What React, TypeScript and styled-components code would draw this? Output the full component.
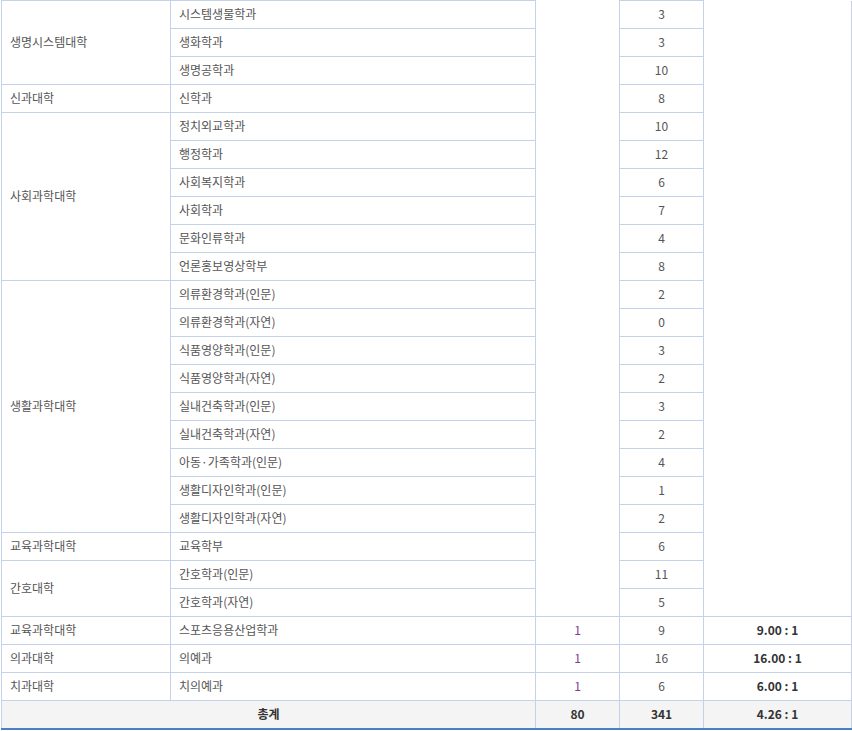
import React from "react";
import styled, { createGlobalStyle } from "styled-components";

const Global = createGlobalStyle`
  html, body { margin: 0; padding: 0; background: #fff; }
  body { font-family: "Noto Sans CJK KR", "Noto Sans", sans-serif; }
`;

const Wrap = styled.div`
  padding: 0 1px;
  width: 850px;
`;

const Table = styled.table`
  width: 850px;
  border-collapse: collapse;
  table-layout: fixed;
  font-size: 12px;
  color: #555;
`;

const Cell = styled.td<{ $center?: boolean; $blank?: boolean; $tone?: "purple" | "strong" }>`
  height: 26px;
  padding: 0 8px 1px;
  border: 1px solid #c3d2e8;
  ${(p) => (p.$blank ? "border-top: none;" : "")}
  text-align: ${(p) => (p.$center ? "center" : "left")};
  vertical-align: middle;
  line-height: 16px;
  white-space: nowrap;
  color: ${(p) => (p.$tone === "purple" ? "#7d3c8c" : p.$tone === "strong" ? "#333" : "#555")};
  font-weight: ${(p) => (p.$tone === "strong" ? 700 : 400)};
`;

const TotalRow = styled.tr`
  background: #f4f4f4;
  & > td {
    border-bottom: 2px solid #4a80c2;
    font-weight: 700;
    color: #333;
    text-align: center;
  }
`;

type Group = { college: string; items: [string, string][] };

const groups: Group[] = [
  { college: "생명시스템대학", items: [["시스템생물학과", "3"], ["생화학과", "3"], ["생명공학과", "10"]] },
  { college: "신과대학", items: [["신학과", "8"]] },
  {
    college: "사회과학대학",
    items: [
      ["정치외교학과", "10"],
      ["행정학과", "12"],
      ["사회복지학과", "6"],
      ["사회학과", "7"],
      ["문화인류학과", "4"],
      ["언론홍보영상학부", "8"],
    ],
  },
  {
    college: "생활과학대학",
    items: [
      ["의류환경학과(인문)", "2"],
      ["의류환경학과(자연)", "0"],
      ["식품영양학과(인문)", "3"],
      ["식품영양학과(자연)", "2"],
      ["실내건축학과(인문)", "3"],
      ["실내건축학과(자연)", "2"],
      ["아동·가족학과(인문)", "4"],
      ["생활디자인학과(인문)", "1"],
      ["생활디자인학과(자연)", "2"],
    ],
  },
  { college: "교육과학대학", items: [["교육학부", "6"]] },
  { college: "간호대학", items: [["간호학과(인문)", "11"], ["간호학과(자연)", "5"]] },
];

const singles = [
  ["교육과학대학", "스포츠응용산업학과", "1", "9", "9.00 : 1"],
  ["의과대학", "의예과", "1", "16", "16.00 : 1"],
  ["치과대학", "치의예과", "1", "6", "6.00 : 1"],
];

const blankSpan = groups.reduce((n, g) => n + g.items.length, 0);

export default function App() {
  let first = true;
  return (
    <Wrap>
      <Global />
      <Table>
        <colgroup>
          <col style={{ width: 169 }} />
          <col style={{ width: 365 }} />
          <col style={{ width: 84 }} />
          <col style={{ width: 84 }} />
          <col style={{ width: 148 }} />
        </colgroup>
        <tbody>
          {groups.map((g) =>
            g.items.map(([dept, n], i) => {
              const isFirst = first;
              first = false;
              return (
                <tr key={g.college + dept}>
                  {i === 0 && <Cell rowSpan={g.items.length}>{g.college}</Cell>}
                  <Cell>{dept}</Cell>
                  {isFirst && <Cell $blank rowSpan={blankSpan} />}
                  <Cell $center>{n}</Cell>
                  {isFirst && <Cell $blank rowSpan={blankSpan} />}
                </tr>
              );
            })
          )}
          {singles.map(([c, d, a, b, r]) => (
            <tr key={d}>
              <Cell>{c}</Cell>
              <Cell>{d}</Cell>
              <Cell $center $tone="purple">{a}</Cell>
              <Cell $center>{b}</Cell>
              <Cell $center $tone="strong">{r}</Cell>
            </tr>
          ))}
          <TotalRow>
            <Cell colSpan={2}>총계</Cell>
            <Cell>80</Cell>
            <Cell>341</Cell>
            <Cell>4.26 : 1</Cell>
          </TotalRow>
        </tbody>
      </Table>
    </Wrap>
  );
}
